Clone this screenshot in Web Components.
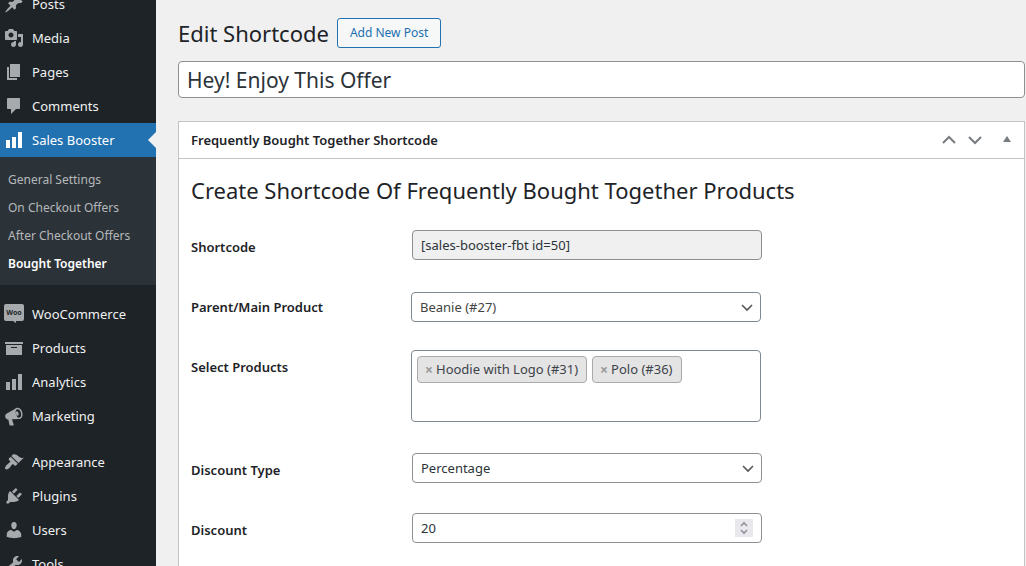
<!DOCTYPE html>
<html lang="en">
<head>
<meta charset="utf-8">
<meta name="viewport" content="width=device-width, initial-scale=1">
<title>Edit Shortcode</title>
<style>
  html, body { margin: 0; height: 100%; }
  body {
    --ink: #1d2327;
    --line: #c3c4c7;
    --control-line: #8c8f94;
    --accent: #2271b1;
    background: #f0f0f1;
    color: #2c3338;
    font: 13px/20px "Noto Sans", "Open Sans", sans-serif;
    overflow: hidden;
  }
</style>
</head>
<body>
<admin-layout>
  <admin-menu slot="menu">
    <menu-item icon="post">Posts</menu-item>
    <menu-item icon="media">Media</menu-item>
    <menu-item icon="page">Pages</menu-item>
    <menu-item icon="comments">Comments</menu-item>
    <menu-item icon="chart" current>Sales Booster</menu-item>
    <sub-menu>
      <sub-item>General Settings</sub-item>
      <sub-item>On Checkout Offers</sub-item>
      <sub-item>After Checkout Offers</sub-item>
      <sub-item current>Bought Together</sub-item>
    </sub-menu>
    <menu-item icon="woo" first>WooCommerce</menu-item>
    <menu-item icon="archive">Products</menu-item>
    <menu-item icon="chart">Analytics</menu-item>
    <menu-item icon="megaphone">Marketing</menu-item>
    <menu-item icon="appearance" first>Appearance</menu-item>
    <menu-item icon="plugins">Plugins</menu-item>
    <menu-item icon="users">Users</menu-item>
    <menu-item icon="tools">Tools</menu-item>
  </admin-menu>
  <page-heading action="Add New Post">Edit Shortcode</page-heading>
  <title-field value="Hey! Enjoy This Offer"></title-field>
  <post-box heading="Frequently Bought Together Shortcode">
    <span slot="title">Create Shortcode Of Frequently Bought Together Products</span>
    <text-field label="Shortcode" value="[sales-booster-fbt id=50]"></text-field>
    <product-field label="Parent/Main Product" value="Beanie (#27)"></product-field>
    <tags-field label="Select Products" values="Hoodie with Logo (#31)|Polo (#36)"></tags-field>
    <select-field label="Discount Type" value="Percentage"></select-field>
    <number-field label="Discount" value="20"></number-field>
  </post-box>
</admin-layout>

<script>
const ICONS = {
  post: '<path d="M10.44 3.02l1.82-1.82 6.36 6.35-1.83 1.82c-1.05-.68-2.48-.57-3.41.36l-.75.75c-.92.93-1.04 2.35-.35 3.41l-1.83 1.82-2.41-2.41-2.8 2.79c-.42.42-3.38 2.71-3.8 2.29s1.86-3.39 2.28-3.81l2.79-2.79L4.1 9.36l1.83-1.82c1.05.69 2.48.57 3.4-.36l.75-.75c.93-.92 1.05-2.35.36-3.41z"/>',
  media: '<path d="M13 11V4c0-.55-.45-1-1-1h-1.67L9 1H5L3.67 3H2c-.55 0-1 .45-1 1v7c0 .55.45 1 1 1h10c.55 0 1-.45 1-1zM7 4.5c1.38 0 2.5 1.12 2.5 2.5S8.38 9.5 7 9.5 4.5 8.38 4.5 7 5.62 4.5 7 4.5zM14 6h5v10.5c0 1.38-1.12 2.5-2.5 2.5S14 17.88 14 16.5s1.12-2.5 2.5-2.5c.17 0 .34.02.5.05V9h-3V6zm-4 8.05V13h2v3.5c0 1.38-1.12 2.5-2.5 2.5S7 17.88 7 16.5 8.12 14 9.5 14c.17 0 .34.02.5.05z"/>',
  page: '<path d="M6 15V2h10v13H6zm-1 1h8v2H3V5h2v11z"/>',
  comments: '<path d="M4 2h11c.6 0 1 .4 1 1v9c0 .6-.4 1-1 1h-3l-5 5v-5H4c-.6 0-1-.4-1-1V3c0-.6.4-1 1-1z"/>',
  chart: '<path d="M18 18V2h-4v16h4zm-6 0V7H8v11h4zm-6 0v-8H2v8h4z"/>',
  archive: '<path d="M19 4v2H1V4h18zM2 7h16v10H2V7zm11 3V9H7v1h6z"/>',
  megaphone: '<path d="M12.6 1.9L2.8 7.6C1.4 8.3.9 9.7 1.3 11.1s1.500 2.500 3 2.300l1.200 5.600c.1.300.300.500.600.500h3.200c.400 0 .600-.300.400-.700L8 13.200l7.500-.300z"/><ellipse cx="14.400" cy="7.400" rx="4" ry="5.700" transform="rotate(-14 14.400 7.400)"/><ellipse cx="14.400" cy="7.400" rx="2.500" ry="4.300" transform="rotate(-14 14.400 7.400)" fill="#1d2327"/><ellipse cx="13.300" cy="7.600" rx="1.300" ry="2.300" transform="rotate(-14 13.300 7.600)"/>',
  appearance: '<path d="M14.48 11.06L7.41 3.99l1.5-1.5c.5-.56 2.3-.47 3.51.32 1.21.8 1.43 1.28 2.91 2.1 1.18.64 2.45 1.26 4.45.85zm-.71.71L6.7 4.7 4.93 6.47c-.39.39-.39 1.02 0 1.41l1.06 1.06c.39.39.39 1.03 0 1.42-.6.6-1.43 1.11-2.21 1.69-.35.26-.7.53-1.01.84C1.43 14.23.4 16.08 1.4 17.07c.99 1 2.84-.03 4.18-1.36.31-.31.58-.66.85-1.02.57-.78 1.08-1.61 1.69-2.21.39-.39 1.02-.39 1.41 0l1.06 1.06c.39.39 1.02.39 1.41 0z"/>',
  plugins: '<path d="M13.11 4.36L9.87 7.6 8 5.73l3.24-3.24c.35-.34 1.05-.2 1.56.32.52.51.66 1.21.31 1.55zm-8 1.77l.91-1.12 9.01 9.01-1.19.84c-.71.71-2.63 1.16-3.82 1.16H6.14L4.9 17.26c-.59.59-1.54.59-2.12 0-.59-.58-.59-1.53 0-2.12l1.24-1.24v-3.88c0-1.13.4-3.19 1.09-3.89zm7.26 3.97l3.24-3.24c.34-.35 1.04-.21 1.55.31.52.51.66 1.21.31 1.55l-3.24 3.25z"/>',
  users: '<path d="M10 9.25c-2.27 0-2.73-3.44-2.73-3.44C7 4.02 7.82 2 9.97 2c2.16 0 2.98 2.02 2.71 3.81 0 0-.41 3.44-2.68 3.44zm0 2.57L12.72 10c2.39 0 4.52 2.33 4.52 4.53v2.49s-3.65 1.13-7.24 1.13c-3.65 0-7.24-1.13-7.24-1.13v-2.49c0-2.25 1.94-4.48 4.47-4.48z"/>',
  tools: '<path d="M16.68 9.77c-1.34 1.34-3.3 1.67-4.95.99l-5.41 6.52c-.99.99-2.59.99-3.58 0s-.99-2.59 0-3.57l6.52-5.42c-.68-1.65-.35-3.61.99-4.95 1.28-1.28 3.12-1.62 4.72-1.06l-2.89 2.89 2.82 2.82 2.86-2.87c.53 1.58.18 3.39-1.08 4.65zM3.81 16.21c.4.39 1.04.39 1.43 0 .4-.4.4-1.04 0-1.43-.39-.4-1.03-.4-1.43 0-.39.39-.39 1.03 0 1.43z"/>',
  woo: '<path d="M2 0h16a2 2 0 0 1 2 2v13a2 2 0 0 1-2 2h-6v2l-3-2H2a2 2 0 0 1-2-2V2a2 2 0 0 1 2-2z"/><text x="10" y="11" text-anchor="middle" font-family="Noto Sans, sans-serif" font-size="7" font-weight="700" fill="#1d2327">Woo</text>'
};

const define = (name, render) => customElements.define(name, class extends HTMLElement {
  constructor() {
    super();
    this.attachShadow({ mode: 'open' });
  }
  connectedCallback() {
    this.shadowRoot.innerHTML = render(this);
  }
});
const attr = (el, name) => el.getAttribute(name) || '';

define('admin-layout', () => `
  <style>
    :host { display: grid; grid-template-columns: 156px minmax(0, 1fr); height: 100vh; overflow: hidden; }
    main { padding: 18px 1px 0 22px; }
  </style>
  <slot name="menu"></slot>
  <main><slot></slot></main>`);

define('admin-menu', () => `
  <style>
    :host { display: block; background: var(--ink); overflow: hidden; }
    nav { margin-top: -13px; }
  </style>
  <nav aria-label="Main menu"><slot></slot></nav>`);

define('menu-item', el => `
  <style>
    :host { display: block; position: relative; color: #f0f0f1; }
    :host([first]) { margin-top: 12px; }
    a { display: grid; grid-template-columns: 20px 1fr; column-gap: 8px; align-items: center;
        height: 34px; padding-left: 4px; color: inherit; text-decoration: none; }
    svg { width: 20px; height: 20px; fill: #a7aaad; }
    :host([current]) { background: var(--accent); color: #fff; }
    :host([current]) svg { fill: #fff; }
    :host([current])::after { content: ""; position: absolute; right: 0; top: 9px;
        border: 8px solid transparent; border-left: 0; border-right-color: #f0f0f1; }
  </style>
  <a href="#"><svg viewBox="0 0 20 20" aria-hidden="true">${ICONS[attr(el, 'icon')]}</svg><span><slot></slot></span></a>`);

define('sub-menu', () => `
  <style>:host { display: block; background: #2c3338; padding: 9px 0 7px; }</style>
  <slot></slot>`);

define('sub-item', () => `
  <style>
    :host { display: block; font-size: 12px; line-height: 28px; color: #b5b8bb; }
    :host([current]) { color: #fff; font-weight: 600; }
    a { display: block; padding-left: 8px; color: inherit; text-decoration: none; }
  </style>
  <a href="#"><slot></slot></a>`);

define('page-heading', el => `
  <style>
    :host { display: flex; align-items: center; gap: 8px; }
    h1 { margin: 0; font-size: 22px; line-height: 30px; font-weight: 400; color: var(--ink); }
    a { box-sizing: border-box; height: 30px; padding: 0 12px; border: 1px solid var(--accent); border-radius: 3px;
        background: #f6f7f7; color: var(--accent); font-size: 12px; line-height: 28px; text-decoration: none; }
  </style>
  <h1><slot></slot></h1><a href="#">${attr(el, 'action')}</a>`);

define('title-field', el => `
  <style>
    :host { display: block; margin: 13px 0 23px; }
    input { display: block; box-sizing: border-box; width: 100%; height: 37px; margin: 0; padding: 0 8px;
        border: 1px solid var(--control-line); border-radius: 4px; background: #fff; color: #2c3338;
        font: 21px/30px "Noto Sans", sans-serif; }
  </style>
  <input type="text" aria-label="Title" value="${attr(el, 'value')}">`);

define('post-box', el => `
  <style>
    :host { display: block; border: 1px solid var(--line); background: #fff; }
    header { display: flex; align-items: center; height: 36px; border-bottom: 1px solid var(--line); padding: 0 4px 0 12px; }
    h2 { flex: 1; margin: 0; font-size: 13px; line-height: 20px; font-weight: 600; color: var(--ink); }
    button { display: grid; place-items: center; width: 26px; height: 36px; margin: 0; padding: 0; border: 0; background: none; }
    button:last-child { margin-left: 6px; }
    svg { width: 20px; height: 20px; fill: none; stroke: #787c82; stroke-width: 2; }
    .fill { fill: #787c82; stroke: none; }
    section { padding: 16px 12px 48px; }
    h1 { margin: 0 0 10px; font-size: 22px; line-height: 30px; font-weight: 400; color: var(--ink); }
  </style>
  <header>
    <h2>${attr(el, 'heading')}</h2>
    <button type="button" aria-label="Move up"><svg viewBox="0 0 20 20"><path d="M4 13l6-6 6 6"/></svg></button>
    <button type="button" aria-label="Move down"><svg viewBox="0 0 20 20"><path d="M4 7l6 6 6-6"/></svg></button>
    <button type="button" aria-label="Toggle panel"><svg class="fill" viewBox="0 0 20 20"><path d="M6 12l4-6 4 6z"/></svg></button>
  </header>
  <section><h1><slot name="title"></slot></h1><slot></slot></section>`);

const ROW = `
  :host { display: grid; grid-template-columns: 200px minmax(0, 350px); column-gap: 20px; align-items: start;
      box-sizing: border-box; min-height: 60px; padding: 15px 0 13px; }
  label, .label { padding-top: 7px; font-size: 13px; line-height: 20px; font-weight: 600; color: var(--ink); }
  .box { position: relative; margin: 0 -1px 0 1px; }
  input, select { display: block; box-sizing: border-box; width: 100%; height: 30px; margin: 0; padding: 0 8px;
      border: 1px solid var(--control-line); border-radius: 4px; background: #fff; color: #2c3338;
      font: 13px/28px "Noto Sans", sans-serif; appearance: none; }
  .chevron { position: absolute; right: 6px; top: 7px; width: 16px; height: 16px; pointer-events: none;
      fill: none; stroke: #555; stroke-width: 1.6; }`;
const CHEVRON = '<svg class="chevron" viewBox="0 0 16 16" aria-hidden="true"><path d="M3 6l5 5 5-5"/></svg>';

define('text-field', el => `
  <style>${ROW} input { background: #f0f0f1; }</style>
  <label for="control">${attr(el, 'label')}</label>
  <div class="box"><input id="control" type="text" readonly value="${attr(el, 'value')}"></div>`);

define('select-field', el => `
  <style>${ROW}</style>
  <label for="control">${attr(el, 'label')}</label>
  <div class="box"><select id="control"><option>${attr(el, 'value')}</option></select>${CHEVRON}</div>`);

define('product-field', el => `
  <style>${ROW} .box { margin: 2px 0 0; } select { border-color: #7e8993; color: #444; }</style>
  <label for="control">${attr(el, 'label')}</label>
  <div class="box"><select id="control"><option>${attr(el, 'value')}</option></select>${CHEVRON}</div>`);

define('tags-field', el => `
  <style>${ROW}
    ul { display: flex; flex-wrap: wrap; align-content: flex-start; gap: 5px; box-sizing: border-box; min-height: 72px;
        margin: 0 0 3px; padding: 5px; border: 1px solid #7e8993; border-radius: 4px; list-style: none; }
    li { display: flex; align-items: center; gap: 3px; box-sizing: border-box; height: 27px; padding: 0 8px 0 7px; border: 1px solid #aaa;
        border-radius: 4px; background: #e4e4e4; color: #3c434a; font-size: 13px; line-height: 25px; }
    button { width: 8px; margin: 0; padding: 0; border: 0; background: none; color: #999; text-align: center;
        font: bold 14px/25px "Noto Sans", sans-serif; }
  </style>
  <span class="label" id="name">${attr(el, 'label')}</span>
  <ul aria-labelledby="name">${attr(el, 'values').split('|').map(v =>
    `<li><button type="button" aria-label="Remove ${v}">×</button><span>${v}</span></li>`).join('')}</ul>`);

define('number-field', el => `
  <style>${ROW}
    input { appearance: textfield; }
    input::-webkit-inner-spin-button { appearance: none; margin: 0; }
    .spin { position: absolute; right: 9px; top: 6px; width: 18px; height: 18px; background: #e9e9ed;
        fill: none; stroke: #8f8f9d; stroke-width: 1.6; pointer-events: none; }
  </style>
  <label for="control">${attr(el, 'label')}</label>
  <div class="box"><input id="control" type="number" value="${attr(el, 'value')}">
    <svg class="spin" viewBox="0 0 18 18" aria-hidden="true"><path d="M6 7l3-3 3 3M6 11l3 3 3-3"/></svg></div>`);
</script>
</body>
</html>
